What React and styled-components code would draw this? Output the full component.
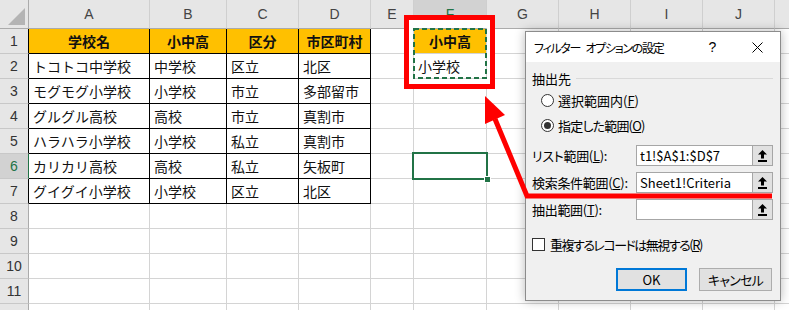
import React from 'react';
import styled, { createGlobalStyle } from 'styled-components';

const GlobalStyle = createGlobalStyle`
  html, body { margin: 0; padding: 0; background: #fff; overflow: hidden; }
  body { font-family: "Noto Sans CJK JP", "Noto Sans", sans-serif; }
`;

const COLS = [121, 77, 72, 72, 43, 73, 72, 72, 72, 72, 72];
const LETTERS = ['A', 'B', 'C', 'D', 'E', 'F', 'G', 'H', 'I', 'J', ''];

const DATA = [
  ['学校名', '小中高', '区分', '市区町村', '', '小中高'],
  ['トコトコ中学校', '中学校', '区立', '北区', '', '小学校'],
  ['モグモグ小学校', '小学校', '市立', '多部留市'],
  ['グルグル高校', '高校', '市立', '真割市'],
  ['ハラハラ小学校', '小学校', '私立', '真割市'],
  ['カリカリ高校', '高校', '私立', '矢板町'],
  ['グイグイ小学校', '小学校', '区立', '北区'],
  [], [], [], [], [],
];

const Page = styled.div`
  position: relative;
  width: 789px;
  height: 310px;
  overflow: hidden;
  background: #fff;
`;

const Sheet = styled.div`
  display: grid;
  grid-template-columns: 29px ${COLS.map((w) => `${w}px`).join(' ')};
  grid-template-rows: 29px repeat(12, 25px);
`;

const Corner = styled.div`
  box-sizing: border-box;
  background: #e6e6e6;
  border-right: 1px solid #ababab;
  border-bottom: 1px solid #ababab;
  display: flex;
  align-items: flex-end;
  justify-content: flex-end;
  padding: 0 3px 3px 0;
`;

const ColHead = styled.div`
  box-sizing: border-box;
  background: ${(p) => (p.$active ? '#d2d2d2' : '#e6e6e6')};
  border-right: 1px solid #cfcfcf;
  border-bottom: 1px solid #ababab;
  display: flex;
  align-items: center;
  justify-content: center;
  font-family: "Liberation Sans", Arial, sans-serif;
  font-size: 14px;
  color: ${(p) => (p.$active ? '#217346' : '#444')};
`;

const RowHead = styled.div`
  box-sizing: border-box;
  background: ${(p) => (p.$active ? '#d2d2d2' : '#e6e6e6')};
  border-right: 1px solid ${(p) => p.$edge};
  border-bottom: 1px solid #c8c8c8;
  display: flex;
  align-items: center;
  justify-content: center;
  font-family: "Liberation Sans", Arial, sans-serif;
  font-size: 14px;
  color: ${(p) => (p.$active ? '#217346' : '#333')};
`;

const Cell = styled.div`
  box-sizing: border-box;
  border-right: 1px solid ${(p) => (p.$table ? '#000' : '#d4d4d4')};
  border-bottom: 1px solid ${(p) => (p.$table ? '#000' : '#d4d4d4')};
  background: ${(p) => (p.$head ? '#ffc000' : '#fff')};
  display: flex;
  align-items: center;
  justify-content: ${(p) => (p.$head ? 'center' : 'flex-start')};
  padding: 0 4px;
  font-size: 14px;
  font-weight: ${(p) => (p.$head ? 700 : 400)};
  color: #111;
  white-space: nowrap;
  overflow: hidden;
`;

const MarchingAnts = styled.svg`
  position: absolute;
  left: 413px;
  top: 28px;
  pointer-events: none;
`;

const RedFrame = styled.div`
  position: absolute;
  left: 404px;
  top: 15px;
  width: 91px;
  height: 74px;
  box-sizing: border-box;
  border: 5px solid #ff0000;
  box-shadow: inset 0 8px 0 #fff, inset 4px 0 0 #fff, inset -3px 0 0 #fff, inset 0 -5px 0 #fff;
  pointer-events: none;
`;

const ActiveCell = styled.div`
  position: absolute;
  left: 412px;
  top: 152px;
  width: 76px;
  height: 28px;
  box-sizing: border-box;
  border: 2px solid #217346;
  pointer-events: none;
`;

const FillHandle = styled.div`
  position: absolute;
  right: -4px;
  bottom: -4px;
  width: 5px;
  height: 5px;
  background: #217346;
  box-shadow: 0 0 0 1px #fff;
`;

const Dialog = styled.div`
  position: absolute;
  left: 525px;
  top: 31px;
  width: 256px;
  height: 270px;
  box-sizing: border-box;
  border: 1px solid #8c8c8c;
  background: #f0f0f0;
  box-shadow: 0 0 10px rgba(0, 0, 0, 0.28);
  display: flex;
  flex-direction: column;
  font-size: 13px;
  color: #000;
  font-feature-settings: "palt";
`;

const TitleBar = styled.div`
  height: 30px;
  background: #fff;
  display: flex;
  align-items: center;
`;

const Title = styled.div`
  flex: 1;
  padding-left: 8px;
  font-size: 12px;
  letter-spacing: -1.3px;
  word-spacing: 4px;
  white-space: nowrap;
`;

const TitleButton = styled.div`
  width: 45px;
  height: 30px;
  display: flex;
  align-items: center;
  justify-content: center;
  font-family: "Liberation Sans", Arial, sans-serif;
  font-size: 14px;
`;

const Body = styled.div`
  display: flex;
  flex-direction: column;
  padding: 0 7px 0 6px;
`;

const GroupHeader = styled.div`
  height: 20px;
  margin-top: 6px;
  display: flex;
  align-items: center;
  gap: 5px;
  &::after {
    content: '';
    flex: 1;
    height: 1px;
    background: #d9d9d9;
  }
`;

const RadioRow = styled.div`
  height: 25px;
  padding-left: 9px;
  display: flex;
  align-items: center;
  gap: 4px;
  letter-spacing: ${(p) => p.$tight || 0}px;
`;

const Radio = styled.span`
  box-sizing: border-box;
  width: 13px;
  height: 13px;
  border-radius: 50%;
  border: 1px solid #333;
  background: #fff;
  display: flex;
  align-items: center;
  justify-content: center;
  &::after {
    content: '';
    display: ${(p) => (p.$checked ? 'block' : 'none')};
    width: 7px;
    height: 7px;
    border-radius: 50%;
    background: #333;
  }
`;

const FieldRow = styled.div`
  height: 21px;
  margin-top: ${(p) => p.$gap}px;
  display: flex;
  align-items: center;
`;

const FieldLabel = styled.div`
  width: 104px;
  white-space: nowrap;
  letter-spacing: -0.3px;
`;

const Input = styled.div`
  box-sizing: border-box;
  width: 116px;
  height: 21px;
  border: 1px solid #a6a6a6;
  border-right: none;
  background: #fff;
  padding-left: 3px;
  display: flex;
  align-items: center;
  white-space: nowrap;
  overflow: hidden;
`;

const UpButton = styled.div`
  box-sizing: border-box;
  width: 21px;
  height: 21px;
  border: 1px solid #a6a6a6;
  background: #e1e1e1;
  display: flex;
  align-items: center;
  justify-content: center;
`;

const CheckRow = styled.div`
  height: 20px;
  margin-top: 14px;
  display: flex;
  align-items: center;
  gap: 5px;
  letter-spacing: -1.5px;
`;

const CheckBox = styled.span`
  box-sizing: border-box;
  width: 13px;
  height: 13px;
  border: 1px solid #333;
  background: #fff;
`;

const ButtonRow = styled.div`
  margin-top: 14px;
  display: flex;
  justify-content: flex-end;
  gap: 12px;
  padding-right: 1px;
`;

const DlgButton = styled.div`
  box-sizing: border-box;
  width: ${(p) => p.$w}px;
  height: 23px;
  border: ${(p) => (p.$primary ? '2px solid #0078d7' : '1px solid #adadad')};
  background: #e1e1e1;
  display: flex;
  align-items: center;
  justify-content: center;
  font-size: 13px;
  letter-spacing: ${(p) => (p.$primary ? 0 : -0.8)}px;
`;

const ArrowLayer = styled.svg`
  position: absolute;
  left: 0;
  top: 0;
  pointer-events: none;
`;

const UpIcon = () => (
  <svg width="9" height="12" viewBox="0 0 9 12">
    <polygon points="4.5,0 9,4.5 6,4.5 6,8.5 3,8.5 3,4.5 0,4.5" fill="#000" />
    <rect x="0" y="10" width="9" height="2" fill="#000" />
  </svg>
);

const Mn = ({ before, letter, after }) => (
  <span>
    {before}(<u>{letter}</u>){after}
  </span>
);

export default function App() {
  const cells = [];
  cells.push(
    <Corner key="corner">
      <svg width="17" height="17" viewBox="0 0 17 17">
        <polygon points="17,0 17,17 0,17" fill="#b4b4b4" />
      </svg>
    </Corner>
  );
  LETTERS.forEach((l, i) => {
    cells.push(
      <ColHead key={`h${i}`} $active={l === 'F'}>
        {l}
      </ColHead>
    );
  });
  DATA.forEach((row, r) => {
    const rowNo = r + 1;
    const inTable = rowNo <= 7;
    const active = rowNo === 6;
    cells.push(
      <RowHead
        key={`r${rowNo}`}
        $active={active}
        $edge={active ? '#217346' : inTable ? '#000' : '#ababab'}
      >
        {rowNo <= 11 ? rowNo : ''}
      </RowHead>
    );
    LETTERS.forEach((l, c) => {
      const table = inTable && c < 4;
      const head = rowNo === 1 && (c < 4 || c === 5);
      cells.push(
        <Cell key={`c${c}-${rowNo}`} $table={table} $head={head}>
          {row[c] || ''}
        </Cell>
      );
    });
  });

  return (
    <Page>
      <GlobalStyle />
      <Sheet>{cells}</Sheet>
      <MarchingAnts width="74" height="51" viewBox="0 0 74 51">
        <rect x="1" y="1" width="72" height="49" fill="none" stroke="#217346" strokeWidth="2" strokeDasharray="5 3" />
      </MarchingAnts>
      <RedFrame />
      <ActiveCell>
        <FillHandle />
      </ActiveCell>
      <Dialog>
        <TitleBar>
          <Title>フィルター オプションの設定</Title>
          <TitleButton>?</TitleButton>
          <TitleButton>
            <svg width="11" height="11" viewBox="0 0 11 11">
              <path d="M0.5 0.5 L10.5 10.5 M10.5 0.5 L0.5 10.5" stroke="#000" strokeWidth="1" />
            </svg>
          </TitleButton>
        </TitleBar>
        <Body>
          <GroupHeader>抽出先</GroupHeader>
          <RadioRow>
            <Radio />
            <Mn before="選択範囲内" letter="F" />
          </RadioRow>
          <RadioRow $tight={-0.8}>
            <Radio $checked />
            <Mn before="指定した範囲" letter="O" />
          </RadioRow>
          <FieldRow $gap={7}>
            <FieldLabel>
              <Mn before="リスト範囲" letter="L" after=":" />
            </FieldLabel>
            <Input>t1!$A$1:$D$7</Input>
            <UpButton>
              <UpIcon />
            </UpButton>
          </FieldRow>
          <FieldRow $gap={6}>
            <FieldLabel>
              <Mn before="検索条件範囲" letter="C" after=":" />
            </FieldLabel>
            <Input>Sheet1!Criteria</Input>
            <UpButton>
              <UpIcon />
            </UpButton>
          </FieldRow>
          <FieldRow $gap={6}>
            <FieldLabel>
              <Mn before="抽出範囲" letter="T" after=":" />
            </FieldLabel>
            <Input />
            <UpButton>
              <UpIcon />
            </UpButton>
          </FieldRow>
          <CheckRow>
            <CheckBox />
            <Mn before="重複するレコードは無視する" letter="R" />
          </CheckRow>
          <ButtonRow>
            <DlgButton $w={71} $primary>OK</DlgButton>
            <DlgButton $w={73}>キャンセル</DlgButton>
          </ButtonRow>
        </Body>
      </Dialog>
      <ArrowLayer width="789" height="310" viewBox="0 0 789 310">
        <polyline
          points="772,196 527,196 495,119"
          fill="none"
          stroke="#ff0000"
          strokeWidth="5"
          strokeLinejoin="miter"
        />
        <polygon points="485,96 505,115 485,124" fill="#ff0000" />
      </ArrowLayer>
    </Page>
  );
}
